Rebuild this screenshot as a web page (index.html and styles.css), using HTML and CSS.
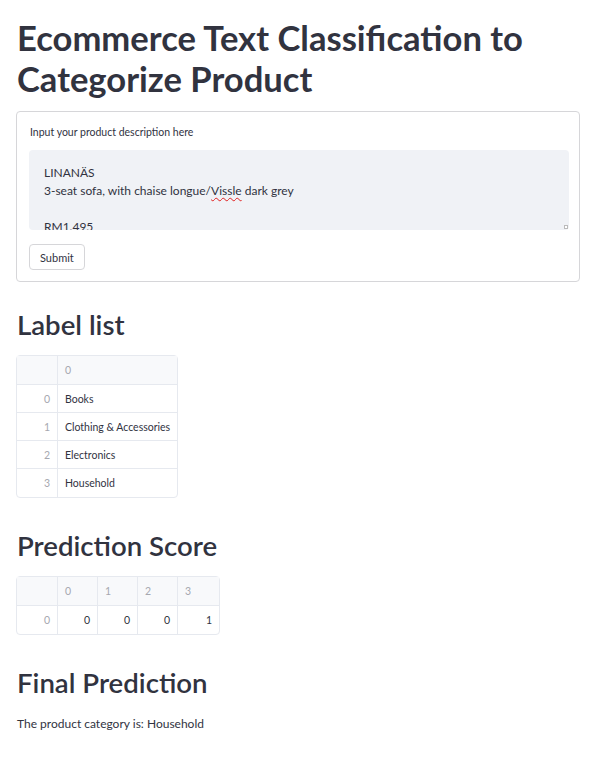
FILE: index.html
```html
<!DOCTYPE html>
<html>
<head>
<meta charset="utf-8">
<link rel="stylesheet" href="styles.css">
</head>
<body>
<main class="main">
  <h1 class="title">Ecommerce Text Classification to Categorize Product</h1>
  <form class="form">
    <div class="label">Input your product description here</div>
    <div class="textarea">
      <div class="ta-text">LINANÄS<br>3-seat sofa, with chaise longue/<span class="spell">Vissle</span> dark grey<br><br>RM1.495</div>
      <span class="grip"></span>
    </div>
    <button type="button" class="btn">Submit</button>
  </form>

  <h2 class="h2">Label list</h2>
  <table class="df">
    <thead><tr><th class="blank"></th><th class="col w120">0</th></tr></thead>
    <tbody>
      <tr><th class="idx">0</th><td class="txt">Books</td></tr>
      <tr><th class="idx">1</th><td class="txt">Clothing &amp; Accessories</td></tr>
      <tr><th class="idx">2</th><td class="txt">Electronics</td></tr>
      <tr><th class="idx">3</th><td class="txt">Household</td></tr>
    </tbody>
  </table>

  <h2 class="h2">Prediction Score</h2>
  <table class="df">
    <thead><tr><th class="blank"></th><th class="col w40">0</th><th class="col w40">1</th><th class="col w40">2</th><th class="col w42">3</th></tr></thead>
    <tbody>
      <tr><th class="idx">0</th><td class="num">0</td><td class="num">0</td><td class="num">0</td><td class="num">1</td></tr>
    </tbody>
  </table>

  <h2 class="h2">Final Prediction</h2>
  <p class="result">The product category is: Household</p>
</main>
</body>
</html>
```
FILE: styles.css
```css
* { box-sizing: border-box; }
html, body { margin: 0; padding: 0; background: #fff; }
body {
  font-family: "Source Sans Pro", "Lato", "Noto Sans", sans-serif;
  color: #31333f;
}
.main { padding: 17px 17px 20px 16px; }
.title {
  font-size: 34.6px;
  line-height: 41px;
  font-weight: 700;
  margin: 0 0 12px 1px;
  letter-spacing: 0;
}
.form {
  border: 1px solid #d6d6d9;
  border-radius: 4px;
  padding: 13px 10px 11px 12px;
  display: flex;
  flex-direction: column;
  align-items: flex-start;
  width: 564px;
}
.label {
  font-size: 10.5px;
  line-height: 14px;
  margin: 0 0 11px 1px;
}
.textarea {
  position: relative;
  width: 540px;
  height: 80px;
  background: #f0f2f6;
  border-radius: 4px;
  padding: 14px 15px 0;
  overflow: hidden;
  font-size: 12px;
  line-height: 18px;
}
.spell {
  text-decoration: underline wavy #e02020;
  text-decoration-thickness: 1px;
  text-underline-offset: 2px;
}
.grip {
  position: absolute;
  right: 1px;
  bottom: 1px;
  width: 4px;
  height: 4px;
  border: 1px solid #bbb;
  background: #fff;
}
.btn {
  margin-top: 14px;
  height: 26px;
  padding: 0 10px;
  background: #fff;
  border: 1px solid #d6d6d9;
  border-radius: 4px;
  font-family: inherit;
  font-size: 11px;
  color: #31333f;
}
.h2 {
  font-size: 27.6px;
  line-height: 34px;
  font-weight: 600;
  margin: 26px 0 13px 1px;
}
.df + .h2 { margin-top: 31px; }
.df {
  border-collapse: separate;
  border-spacing: 0;
  border: 1px solid #e6e9ef;
  border-radius: 4px;
  font-size: 10.5px;
  line-height: 14px;
}
.df th, .df td {
  padding: 0 7px;
  border-right: 1px solid #e6e9ef;
  border-bottom: 1px solid #e6e9ef;
  font-weight: 400;
  height: 28px;
  white-space: nowrap;
}
.df tr > :last-child { border-right: none; }
.df tbody tr:last-child > * { border-bottom: none; }
.df thead th { background: #f8f9fb; height: 29px; color: #a6a8b0; text-align: left; }
.df .blank { width: 41px; }
.df .idx { color: #a6a8b0; text-align: right; width: 41px; }
.df .txt { color: #31333f; width: 119px; }
.df .num { color: #31333f; text-align: right; }
.w120 { width: 119px; }
.w40 { width: 40px; }
.w42 { width: 41px; }
.result {
  font-size: 12px;
  line-height: 18px;
  margin: 15px 0 0 1px;
}
```
